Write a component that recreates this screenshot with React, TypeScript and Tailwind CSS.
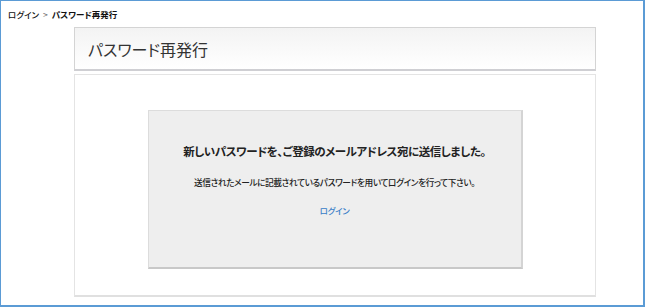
import React from "react";

export default function App() {
  const font = { fontFamily: '"Noto Sans CJK JP", "Noto Sans", sans-serif' };
  return (
    <div
      className="w-[645px] h-[307px] bg-white border-[#5b9bd5] border-t border-l border-r-2 border-b-2 box-border overflow-hidden text-[#333] [font-feature-settings:'palt']"
      style={font}
    >
      <div className="flex items-center h-[26px] pl-[7px] pt-[1px] text-[8.5px] leading-none text-[#111]">
        <span className="font-medium">ログイン</span>
        <span className="mx-[4px] text-[#666]">&gt;</span>
        <span className="font-bold">パスワード再発行</span>
      </div>
      <div className="ml-[73px] w-[522px] flex flex-col">
        <div className="h-[44px] border border-[#d4d4d4] border-b-2 border-b-[#cfcfd3] bg-gradient-to-b from-[#f3f3f3] to-white flex items-center pl-[13px] pt-[1px]">
          <span className="text-[16px] leading-none text-[#333]">パスワード再発行</span>
        </div>
        <div className="mt-[3px] h-[223px] border border-[#e4e4e4] border-b-2 border-b-[#e0e0e0] pt-[35px] flex justify-center">
          <div className="w-[375px] h-[159px] bg-[#eeeeee] border border-[#dcdcdc] border-b-2 border-r-2 border-b-[#c8c8c8] border-r-[#d4d4d4] flex flex-col items-center">
            <div className="mt-[35px] text-[11.5px] tracking-[-0.45px] font-bold leading-none text-[#222]">
              新しいパスワードを、ご登録のメールアドレス宛に送信しました。
            </div>
            <div className="mt-[21px] text-[8.7px] tracking-[-0.4px] font-medium leading-none text-[#222]">
              送信されたメールに記載されているパスワードを用いてログインを行って下さい。
            </div>
            <div className="mt-[19px] text-[8.5px] tracking-[-0.3px] font-medium leading-none text-[#3a80c8]">ログイン</div>
          </div>
        </div>
      </div>
    </div>
  );
}
